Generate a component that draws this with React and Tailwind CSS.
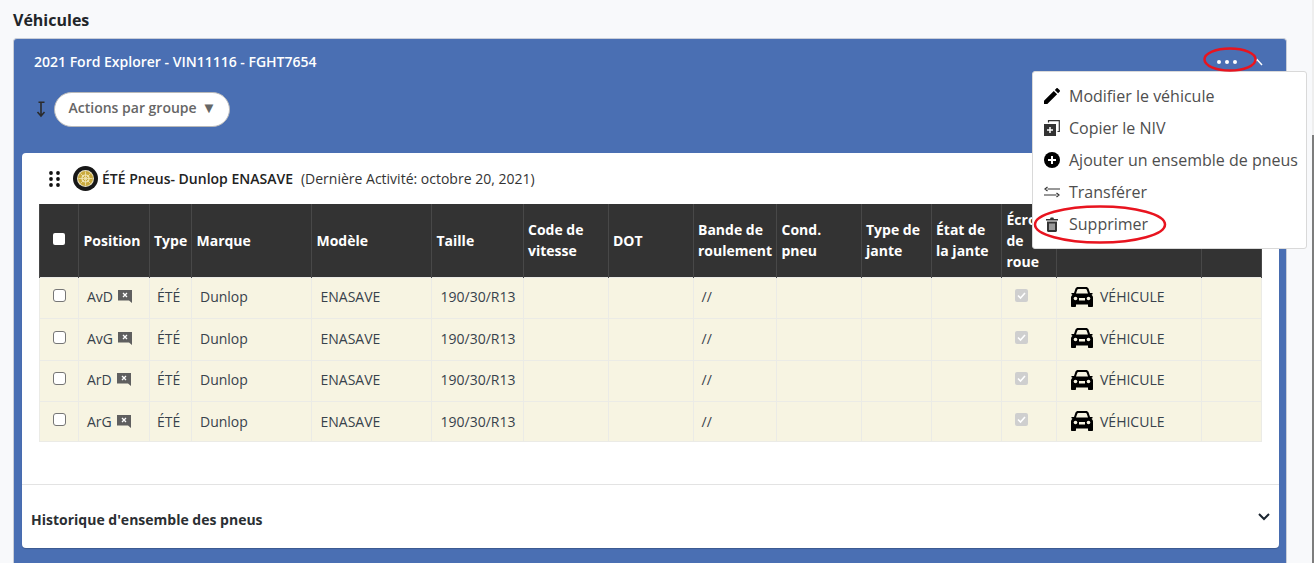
import React from "react";

const cols = [39, 71, 42, 120, 120, 92, 85, 85, 83, 85, 70, 70, 55, 145, 60];
const headers = [
  null, "Position", "Type", "Marque", "Modèle", "Taille", "Code de vitesse", "DOT",
  "Bande de roulement", "Cond. pneu", "Type de jante", "État de la jante", "Écrou de roue", "Emplacement", "",
];
const tight = [2, 6, 7, 8, 10, 11];
const rows = [
  { name: "AvD", h: "h-[41px]" },
  { name: "AvG", h: "h-[42px]" },
  { name: "ArD", h: "h-[41px]" },
  { name: "ArG", h: "h-[40px] [&>td]:pb-0!" },
];

function Note() {
  return (
    <svg width="15" height="15" viewBox="0 0 15 15" className="ml-[5px] inline-block">
      <path d="M0 1h14v13l-3-2.500H0z" fill="#5f5f5f" />
      <path d="M5 4l4 4M9 4l-4 4" stroke="#fff" strokeWidth="1.300" />
    </svg>
  );
}

function Car() {
  return (
    <svg width="24" height="20" viewBox="0 0 24 20">
      <path d="M5.500 1.500C6 .6 6.800 0 8 0h8c1.200 0 2 .6 2.500 1.500L20 6h1.500c.8 0 1.300.5 1.300 1l-1.300.8c1 .8 1.500 1.800 1.500 3V19c0 .6-.4 1-1 1h-3c-.6 0-1-.4-1-1v-1.500H6V19c0 .6-.4 1-1 1H2c-.6 0-1-.4-1-1v-8.200c0-1.200.5-2.200 1.500-3L1.200 7c0-.5.5-1 1.300-1H4z" fill="#000" />
      <path d="M6 6.500l1.300-3.800c.2-.5.5-.7 1-.7h7.400c.5 0 .8.2 1 .7L18 6.500z" fill="#f7f4e2" />
      <circle cx="5.500" cy="11.500" r="1.800" fill="#f7f4e2" />
      <circle cx="18.500" cy="11.500" r="1.800" fill="#f7f4e2" />
      <rect x="9" y="11" width="6" height="2.500" fill="#f7f4e2" />
    </svg>
  );
}

function Tire() {
  return (
    <svg width="25" height="25" viewBox="0 0 25 25">
      <circle cx="12.500" cy="12.500" r="12.500" fill="#171717" />
      <circle cx="12.500" cy="12.500" r="8.500" fill="#e9e2c4" />
      <circle cx="12.500" cy="12.500" r="7.500" fill="#c9a93c" />
      <circle cx="12.500" cy="12.500" r="3.500" fill="none" stroke="#f1e6b5" strokeWidth="1.200" />
      <path d="M12.500 5.500v14M5.500 12.500h14M7.500 7.500l10 10M17.500 7.500l-10 10" stroke="#f1e6b5" strokeWidth=".8" />
    </svg>
  );
}

function Drag() {
  return (
    <svg width="11" height="16" viewBox="0 0 11 16" fill="#111">
      {[2, 8, 14].map((y) => (
        <React.Fragment key={y}>
          <circle cx="2" cy={y} r="1.900" />
          <circle cx="9" cy={y} r="1.900" />
        </React.Fragment>
      ))}
    </svg>
  );
}

function MenuItem({ icon, label }) {
  return (
    <div className="flex h-8 items-center">
      <span className="flex w-[36px] justify-start pl-[11px]">{icon}</span>
      <span className="text-[16px] leading-8 text-[#4e4e4e]">{label}</span>
    </div>
  );
}

export default function App() {
  return (
    <div className="relative h-[563px] w-[1314px] overflow-hidden bg-[#f8f9fb] pl-[13px] font-['Open_Sans',sans-serif]">
      <h1 className="h-[38px] pt-[8px] text-[16px] leading-[24px] font-bold text-[#212529]">Véhicules</h1>

      <section className="h-[560px] w-[1274px] rounded-t-[4px] border border-[#c9ced8] border-b-0 bg-[#4a6fb3] pt-[13px] pr-[7px] pl-[8px]">
        <div className="flex h-[20px] items-center pl-[12px]">
          <span className="text-[14px] leading-[20px] font-semibold text-white">2021 Ford Explorer - VIN11116 - FGHT7654</span>
          <div className="ml-auto mr-[16px] flex items-center">
            <span className="h-[4px] w-[4px] rounded-full bg-white" />
            <span className="ml-[4px] h-[4px] w-[4px] rounded-full bg-white" />
            <span className="ml-[4px] h-[4px] w-[4px] rounded-full bg-white" />
            <svg width="12" height="8" viewBox="0 0 12 8" className="ml-[14px]">
              <path d="M1 7l5-5.500L11 7" fill="none" stroke="#fff" strokeWidth="1.500" />
            </svg>
          </div>
        </div>

        <div className="mt-[19px] flex h-[36px] items-center pl-[15px]">
          <svg width="12" height="18" viewBox="0 0 12 18" className="-ml-[1px]">
            <path d="M2.500 2.200h6M5 1.500v14M1.500 12L5 16l3.500-4" fill="none" stroke="#2b2b2b" strokeWidth="1.600" />
          </svg>
          <button className="ml-[6px] flex h-[35px] w-[176px] items-center justify-center rounded-full border border-[#b9b9b9] bg-white pb-[3px] pl-[1px] text-[14px] font-semibold text-[#666]">
            Actions par groupe <span className="ml-[5px] text-[15px] leading-none">▼</span>
          </button>
        </div>

        <div className="mt-[26px] h-[395px] rounded-[4px] bg-white shadow-[0_1px_1px_rgba(0,0,0,0.2)]">
          <div className="flex h-[51px] items-center pl-[27px]">
            <Drag />
            <span className="ml-[13px]"><Tire /></span>
            <span className="ml-[4px] text-[14px] font-semibold text-[#222]">ÉTÉ Pneus- Dunlop ENASAVE</span>
            <span className="ml-[8px] text-[14px] text-[#333]">(Dernière Activité: octobre 20, 2021)</span>
          </div>

          <div className="pl-[17px]">
            <table className="w-[1222px] table-fixed border-collapse text-left">
              <colgroup>
                {cols.map((w, i) => <col key={i} style={{ width: w }} />)}
              </colgroup>
              <thead>
                <tr className="h-[73px] bg-[#333333]">
                  {headers.map((h, i) => (
                    <th key={i} className={`${tight.includes(i) ? "px-[4px]" : "px-[4.500px]"} border-x border-[#484848] align-middle text-[14px] leading-[21px] font-bold text-white`}>
                      {i === 0 ? (
                        <span className="ml-[8.500px] -mt-[3px] block h-[12px] w-[12px] rounded-[2px] bg-white" />
                      ) : h}
                    </th>
                  ))}
                </tr>
              </thead>
              <tbody>
                {rows.map((r) => (
                  <tr key={r.name} className={`${r.h} bg-[#f7f4e2] text-[14px] text-[#38424c]`}>
                    <td className="border border-[#ebebe6] pl-[13px]">
                      <span className="-mt-[4px] block h-[13px] w-[13px] rounded-[3px] border border-[#767676] bg-white" />
                    </td>
                    <td className="border border-[#ebebe6] pb-[2px] pl-[8px]"><span className="flex items-center">{r.name}<Note /></span></td>
                    <td className="border border-[#ebebe6] pb-[2px] pl-[7px]">ÉTÉ</td>
                    <td className="border border-[#ebebe6] pb-[2px] pl-[8px]">Dunlop</td>
                    <td className="border border-[#ebebe6] pb-[2px] pl-[8.500px]">ENASAVE</td>
                    <td className="border border-[#ebebe6] pb-[2px] pl-[8.500px]">190/30/R13</td>
                    <td className="border border-[#ebebe6]" />
                    <td className="border border-[#ebebe6]" />
                    <td className="border border-[#ebebe6] pb-[2px] pl-[7.500px]">//</td>
                    <td className="border border-[#ebebe6]" />
                    <td className="border border-[#ebebe6]" />
                    <td className="border border-[#ebebe6]" />
                    <td className="border border-[#ebebe6] pl-[13px]">
                      <span className="-mt-[4px] flex h-[13px] w-[13px] items-center justify-center rounded-[2px] bg-[#cfcfcf]">
                        <svg width="9" height="9" viewBox="0 0 9 9"><path d="M1 4.500l2.500 2.500L8 2" fill="none" stroke="#fff" strokeWidth="1.600" /></svg>
                      </span>
                    </td>
                    <td className="border border-[#ebebe6] pb-[2px] pl-[13px]">
                      <span className="flex items-center gap-[6px]"><Car />VÉHICULE</span>
                    </td>
                    <td className="border border-[#ebebe6]" />
                  </tr>
                ))}
              </tbody>
            </table>
          </div>

          <div className="mt-[42px] flex h-[64px] items-center justify-between border-t border-[#e3e3e3] pr-[9px] pl-[9px]">
            <span className="mt-[6px] text-[14px] font-bold text-[#2b2f33]">Historique d'ensemble des pneus</span>
            <svg width="12" height="8" viewBox="0 0 12 8" className="mt-[2px]">
              <path d="M1 1l5 5 5-5" fill="none" stroke="#1b2530" strokeWidth="2" />
            </svg>
          </div>
        </div>
      </section>

      <div className="absolute top-[71px] left-[1032px] h-[178px] w-[275px] rounded-[3px] border border-[#d9d9d9] bg-white pt-[8px]">
        <MenuItem label="Modifier le véhicule" icon={
          <svg width="16" height="16" viewBox="0 0 16 16"><path d="M0 16v-3.300L9.800 2.900l3.300 3.300L3.300 16zM10.800 1.900L12.300.4c.5-.5 1.100-.5 1.600 0l1.700 1.700c.5.500.5 1.100 0 1.600l-1.500 1.500z" fill="#000" /></svg>
        } />
        <MenuItem label="Copier le NIV" icon={
          <svg width="16" height="16" viewBox="0 0 16 16"><path d="M4.500 2.500V.7h10.800v10.800h-1.800" fill="none" stroke="#333" strokeWidth="1.200" /><path d="M0 4h12v12H0z" fill="#333" /><path d="M6 7v6M3 10h6" stroke="#fff" strokeWidth="1.500" /></svg>
        } />
        <MenuItem label="Ajouter un ensemble de pneus" icon={
          <svg width="16" height="16" viewBox="0 0 16 16"><circle cx="8" cy="8" r="8" fill="#000" /><path d="M8 4v8M4 8h8" stroke="#fff" strokeWidth="2" /></svg>
        } />
        <MenuItem label="Transférer" icon={
          <svg width="16" height="12" viewBox="0 0 16 12"><path d="M3.500 3H16M3.500 1L1 3l2.500 2M0 9h12.500M12.500 7L15 9l-2.500 2" fill="none" stroke="#333" strokeWidth="1.200" /></svg>
        } />
        <MenuItem label="Supprimer" icon={
          <svg width="12" height="15" viewBox="0 0 12 15" className="ml-[2px]"><path d="M0 2h4l.7-1.500h2.600L8 2h4v1.500H0z" fill="#333" /><path d="M1 4.500h10V13.500c0 .8-.6 1.500-1.500 1.500h-7C1.600 15 1 14.300 1 13.500z" fill="#333" /><path d="M4 6.500V13M6 6.500V13M8 6.500V13" stroke="#fff" /></svg>
        } />
      </div>

      <svg width="1314" height="563" className="pointer-events-none absolute top-0 left-0" fill="none" stroke="#e8141f" strokeWidth="2.500">
        <ellipse cx="1230" cy="59.500" rx="25.500" ry="11" />
        <ellipse cx="1100" cy="224.500" rx="65" ry="18" />
      </svg>

      <div className="absolute top-0 right-0 h-[563px] w-[2px] bg-[#eeeeee]">
        <div className="mt-[135px] h-[428px] w-[2px] bg-[#7d7d7d]" />
      </div>
    </div>
  );
}
